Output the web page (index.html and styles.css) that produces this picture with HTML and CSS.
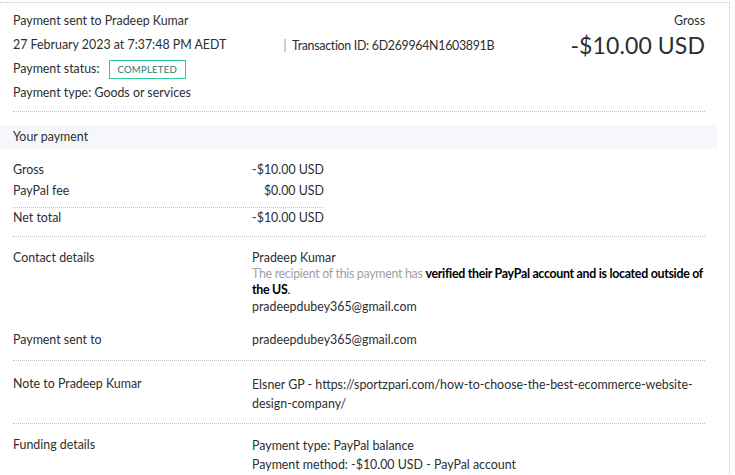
FILE: index.html
```html
<!DOCTYPE html>
<html>
	<head>
		<meta charset="UTF-8">
		<title>Transaction details</title>
		<link rel="stylesheet" href="styles.css">
	</head>
	<body>
		<div class="page">
			<div class="detail">
				<div class="head">
					<div class="head-left">
						<div class="line">Payment sent to Pradeep Kumar</div>
						<div class="line date-row">
							<span class="date">27 February 2023 at 7:37:48 PM AEDT</span>
							<span class="txn">Transaction ID: 6D269964N1603891B</span>
						</div>
						<div class="line">Payment status: <span class="badge">COMPLETED</span></div>
						<div class="line">Payment type: Goods or services</div>
					</div>
					<div class="head-right">
						<div class="gross-label">Gross</div>
						<div class="gross-amt">-$10.00 USD</div>
					</div>
				</div>

				<div class="band">Your payment</div>

				<div class="sums">
					<div class="sum-row"><span>Gross</span><span>-$10.00 USD</span></div>
					<div class="sum-row"><span>PayPal fee</span><span>$0.00 USD</span></div>
					<div class="sum-row total"><span>Net total</span><span>-$10.00 USD</span></div>
				</div>

				<div class="info contact">
					<div class="info-row">
						<div class="label">Contact details</div>
						<div class="value">
							<div>Pradeep Kumar</div>
							<div class="note"><span class="grey">The recipient of this payment has </span><b>verified their PayPal account and is located outside of the US</b>.</div>
							<div>pradeepdubey365@gmail.com</div>
						</div>
					</div>
					<div class="info-row sent">
						<div class="label">Payment sent to</div>
						<div class="value">pradeepdubey365@gmail.com</div>
					</div>
				</div>

				<div class="info memo">
					<div class="info-row">
						<div class="label">Note to Pradeep Kumar</div>
						<div class="value tall">Elsner GP - https://sportzpari.com/how-to-choose-the-best-ecommerce-website-design-company/</div>
					</div>
				</div>

				<div class="info last">
					<div class="info-row">
						<div class="label">Funding details</div>
						<div class="value tall">
							<div>Payment type: PayPal balance</div>
							<div>Payment method: -$10.00 USD - PayPal account</div>
						</div>
					</div>
				</div>
			</div>
		</div>
	</body>
</html>
```

FILE: styles.css
```css
*{
	padding: 0;
	margin: 0;
	box-sizing: border-box;
}
body{
	font-family: Lato, "Open Sans", sans-serif;
	font-size: 12.4px;
	color: #2c2e2f;
	background: #fff;
}
b{
	font-weight: 700;
	color: #000;
}
.page{
	width: 730px;
	margin-top: 2px;
	border-top: 1px dotted #c4c4c4;
	border-right: 1px dotted #c4c4c4;
	min-height: 480px;
}
.detail{
	width: 717px;
}
.head{
	margin: 0 12px 0 13px;
	padding-top: 9px;
	padding-bottom: 6px;
	border-bottom: 1px dotted #c4c4c4;
	display: flex;
	justify-content: space-between;
}
.head-left .line{
	height: 24px;
	line-height: 18px;
	display: flex;
	align-items: center;
}
.head-left .line:first-child{
	height: 18px;
	margin-bottom: 3px;
}
.date{
	width: 271px;
}
.txn{
	border-left: 2px solid #cfcfcf;
	padding-left: 6px;
	line-height: 13px;
	letter-spacing: -0.3px;
}
.badge{
	display: inline-block;
	margin-left: 9px;
	border: 1px solid #2ec99a;
	color: #2a7c6c;
	font-size: 9.6px;
	letter-spacing: 0.2px;
	height: 19px;
	line-height: 17px;
	padding: 0 8px;
}
.head-right{
	text-align: right;
}
.gross-label{
	line-height: 18px;
}
.gross-amt{
	font-size: 23px;
	line-height: 28px;
	margin-top: 1px;
	letter-spacing: 0.1px;
}
.band{
	margin-top: 13px;
	background: #f5f7fa;
	height: 24px;
	line-height: 24px;
	padding-left: 13px;
}
.sums{
	margin: 0 12px 0 13px;
	padding-top: 10px;
	padding-bottom: 7px;
	border-bottom: 1px dotted #c4c4c4;
}
.sum-row{
	width: 311px;
	display: flex;
	justify-content: space-between;
	height: 21px;
	line-height: 21px;
}
.sum-row.total{
	border-top: 1px dotted #c4c4c4;
	margin-top: 6px;
	height: 22px;
	line-height: 20px;
}
.info{
	margin: 0 12px 0 13px;
	padding-top: 12px;
	padding-bottom: 12px;
	border-bottom: 1px dotted #c4c4c4;
}
.info.memo{
	padding-top: 14px;
	padding-bottom: 10px;
}
.info.last{
	border-bottom: none;
}
.info-row{
	display: flex;
	line-height: 17px;
}
.label{
	width: 239px;
	flex-shrink: 0;
}
.value{
	flex: 1;
}
.value.tall{
	line-height: 19px;
}
.note{
	line-height: 16px;
	letter-spacing: -0.3px;
}
.grey{
	color: #9da3a6;
}
.sent{
	margin-top: 16px;
}
```
